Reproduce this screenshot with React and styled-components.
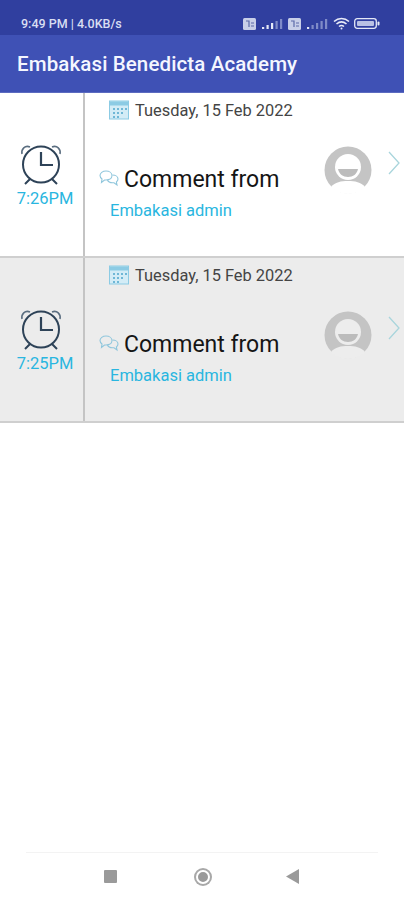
import React from 'react';
import styled, { createGlobalStyle } from 'styled-components';

const GlobalStyle = createGlobalStyle`
  html, body {
    margin: 0;
    padding: 0;
    background: #fff;
    font-family: Roboto, "Liberation Sans", sans-serif;
  }
`;

const Page = styled.div`
  width: 404px;
  height: 900px;
  display: flex;
  flex-direction: column;
  background: #fff;
  overflow: hidden;
`;

const StatusBar = styled.div`
  height: 35px;
  flex: none;
  background: #303f9f;
  display: flex;
  align-items: center;
  justify-content: space-between;
  padding: 12px 24px 0 21px;
  box-sizing: border-box;
  color: #d9def2;
  font-size: 12.5px;
  font-weight: 500;
`;

const StatusIcons = styled.div`
  display: flex;
  align-items: center;
  gap: 4px;
`;

const Toolbar = styled.div`
  height: 58px;
  flex: none;
  background: #3f51b5;
  color: #f4f6ff;
  font-size: 20.5px;
  font-weight: 500;
  letter-spacing: 0.12px;
  display: flex;
  align-items: center;
  padding: 0 0 1px 17px;
  box-sizing: border-box;
  box-shadow: inset 0 -1px 0 #5c6bc0;
`;

const Row = styled.div`
  height: 165px;
  flex: none;
  box-sizing: border-box;
  display: grid;
  grid-template-columns: 85px 1fr;
  background: ${(props) => (props.shaded ? '#ececec' : '#fff')};
  border-bottom: 2px solid #cfcfcf;
`;

const TimeCell = styled.div`
  border-right: 2px solid #c4c4c4;
  display: flex;
  flex-direction: column;
  align-items: center;
  padding: 50px 2px 0 0;
`;

const Time = styled.div`
  margin: 5px 0 0 9px;
  color: #29b6e0;
  font-size: 16.500px;
  line-height: 18px;
`;

const Body = styled.div`
  display: flex;
  flex-direction: column;
`;

const DateLine = styled.div`
  display: flex;
  align-items: center;
  gap: 6px;
  height: 20px;
  margin: 7px 0 0 24px;
  color: #444;
  font-size: 16.400px;
`;

const Main = styled.div`
  display: flex;
  align-items: flex-start;
  padding-top: 29px;
`;

const Message = styled.div`
  width: 239px;
  padding: 17px 0 0 14px;
  box-sizing: border-box;
`;

const CommentLine = styled.div`
  display: flex;
  align-items: center;
  gap: 5px;
  color: #151515;
  font-size: 23px;
  line-height: 28px;

  svg {
    margin-bottom: 4px;
  }
`;

const Sender = styled.div`
  margin: 8px 0 0 11px;
  color: #29b6e0;
  font-size: 16.500px;
  line-height: 18px;
`;

const Avatar = styled.svg`
  flex: none;
  margin-top: -3px;
  display: block;
`;

const Chevron = styled.svg`
  flex: none;
  margin: 2px 0 0 16px;
  display: block;
`;

const NavBar = styled.div`
  margin: auto 26px 0;
  height: 47px;
  border-top: 1px solid #f3f3f3;
  display: flex;
  align-items: center;
  justify-content: space-between;
  padding: 0 79px 0 78px;
  flex: none;
`;

const Square = styled.div`
  width: 13px;
  height: 13px;
  background: #9a9a9a;
  border-radius: 1px;
`;

const Ring = styled.div`
  width: 10px;
  height: 10px;
  margin-left: 3px;
  border-radius: 50%;
  background: #9a9a9a;
  border: 2px solid #fff;
  box-shadow: 0 0 0 2px #a8a8a8;
`;

const AlarmIcon = () => (
  <svg width="42" height="42" viewBox="0 0 42 42" fill="none" stroke="#2e4358" strokeWidth="2">
    <circle cx="21" cy="21.5" r="18" />
    <path d="M21 9v13h12" strokeWidth="2.2" />
    <path d="M2 11c-1-5 3-9 8-7M40 11c1-5-3-9-8-7" strokeWidth="1.6" stroke="#5b6e80" />
    <path d="M10 36l-5 5M32 36l5 5" strokeWidth="2" />
  </svg>
);

const CalendarIcon = () => (
  <svg width="20" height="20" viewBox="0 0 20 20" fill="none">
    <rect x="0.5" y="1" width="19" height="18" fill="#d3ecf6" stroke="#8ccbe4" />
    <rect x="1" y="1.5" width="18" height="4" fill="#8ccbe4" />
    <path d="M4 8h2v2H4zM8 8h2v2H8zM12 8h2v2h-2zM16 8h2v2h-2zM4 12h2v2H4zM8 12h2v2H8zM12 12h2v2h-2zM4 16h2v2H4zM8 16h2v2H8z" fill="#6fb7d6" />
  </svg>
);

const ChatIcon = () => (
  <svg width="20" height="17" viewBox="0 0 20 17" fill="none" stroke="#8fc6dc" strokeWidth="1.1">
    <path d="M7 1c3.4 0 6 2 6 4.6S10.4 10 7 10H5.5L2.5 12.5 3 9C1.600 8 1 6.900 1 5.600 1 3 3.600 1 7 1z" />
    <path d="M13.500 5c3 0 5.500 1.700 5.500 4 0 1.200-.6 2.200-1.600 3l.6 3-3-2.200h-1.500c-2.400 0-4.300-1-5-2.800" />
  </svg>
);

const AvatarIcon = ({ shaded }) => {
  const skin = shaded ? '#ededed' : '#fff';
  return (
    <Avatar width="48" height="48" viewBox="0 0 48 48">
      <circle cx="24" cy="24" r="23.500" fill="#c4c4c4" />
      <circle cx="24" cy="21" r="13" fill={skin} />
      <path d="M14 23h20c-1 5-5 8-10 8s-9-3-10-8z" fill="#bcbcbc" />
      <path d="M7 41c4-5 10-6 17-6s13 1 17 6c-4 4-10 7-17 7S11 45 7 41z" fill={skin} />
    </Avatar>
  );
};

const SignalIcon = ({ bars }) => (
  <svg width="24" height="12" viewBox="0 0 24 12">
    {[0, 1, 2, 3, 4].map((i) => (
      <rect key={i} x={2 + i * 4.500} y={9 - i * 2} width="2.200" height={2 + i * 2} fill={i < bars ? '#e4e8f6' : '#7f8bc8'} />
    ))}
  </svg>
);

const SimBadge = () => (
  <svg width="13" height="12" viewBox="0 0 13 12">
    <rect width="13" height="12" rx="1.500" fill="#c8cfe8" />
    <path d="M3 3h3v6M8 5h3M8 8h3" stroke="#5c6aa8" strokeWidth="1.200" fill="none" />
  </svg>
);

const WifiIcon = () => (
  <svg width="17" height="13" viewBox="0 0 17 13" fill="none" stroke="#e8ebf8" strokeWidth="1.600">
    <path d="M1 4.500c4.500-4 10.500-4 15 0M3.500 7c3-2.600 7-2.600 10 0M6 9.500c1.500-1.200 3.500-1.200 5 0" />
    <circle cx="8.500" cy="11.500" r="1" fill="#e8ebf8" stroke="none" />
  </svg>
);

const BatteryIcon = () => (
  <svg width="26" height="11" viewBox="0 0 26 11" fill="none">
    <rect x="0.700" y="0.700" width="21.600" height="9.600" rx="2.500" stroke="#e4e8f6" strokeWidth="1.300" />
    <rect x="3" y="3" width="17" height="5" rx="1" fill="#b9c1e4" />
    <rect x="23.500" y="3.500" width="2" height="4" rx="1" fill="#e4e8f6" />
  </svg>
);

const items = [
  { time: '7:26PM', shaded: false },
  { time: '7:25PM', shaded: true },
];

const App = () => {
  return (
    <Page>
      <GlobalStyle />
      <StatusBar>
        <span>9:49 PM | 4.0KB/s</span>
        <StatusIcons>
          <SimBadge />
          <SignalIcon bars={3} />
          <SimBadge />
          <SignalIcon bars={1} />
          <WifiIcon />
          <BatteryIcon />
        </StatusIcons>
      </StatusBar>
      <Toolbar>Embakasi Benedicta Academy</Toolbar>
      {items.map((item) => (
        <Row key={item.time} shaded={item.shaded}>
          <TimeCell>
            <AlarmIcon />
            <Time>{item.time}</Time>
          </TimeCell>
          <Body>
            <DateLine>
              <CalendarIcon />
              Tuesday, 15 Feb 2022
            </DateLine>
            <Main>
              <Message>
                <CommentLine>
                  <ChatIcon />
                  Comment from
                </CommentLine>
                <Sender>Embakasi admin</Sender>
              </Message>
              <AvatarIcon shaded={item.shaded} />
              <Chevron width="12" height="24" viewBox="0 0 12 24" fill="none" stroke="#a9d5dc" strokeWidth="1.300">
                <path d="M1 1l10 11L1 23" />
              </Chevron>
            </Main>
          </Body>
        </Row>
      ))}
      <NavBar>
        <Square />
        <Ring />
        <svg width="13" height="15" viewBox="0 0 13 15">
          <path d="M13 0v15L0 7.500z" fill="#9a9a9a" />
        </svg>
      </NavBar>
    </Page>
  );
};

export default App;
